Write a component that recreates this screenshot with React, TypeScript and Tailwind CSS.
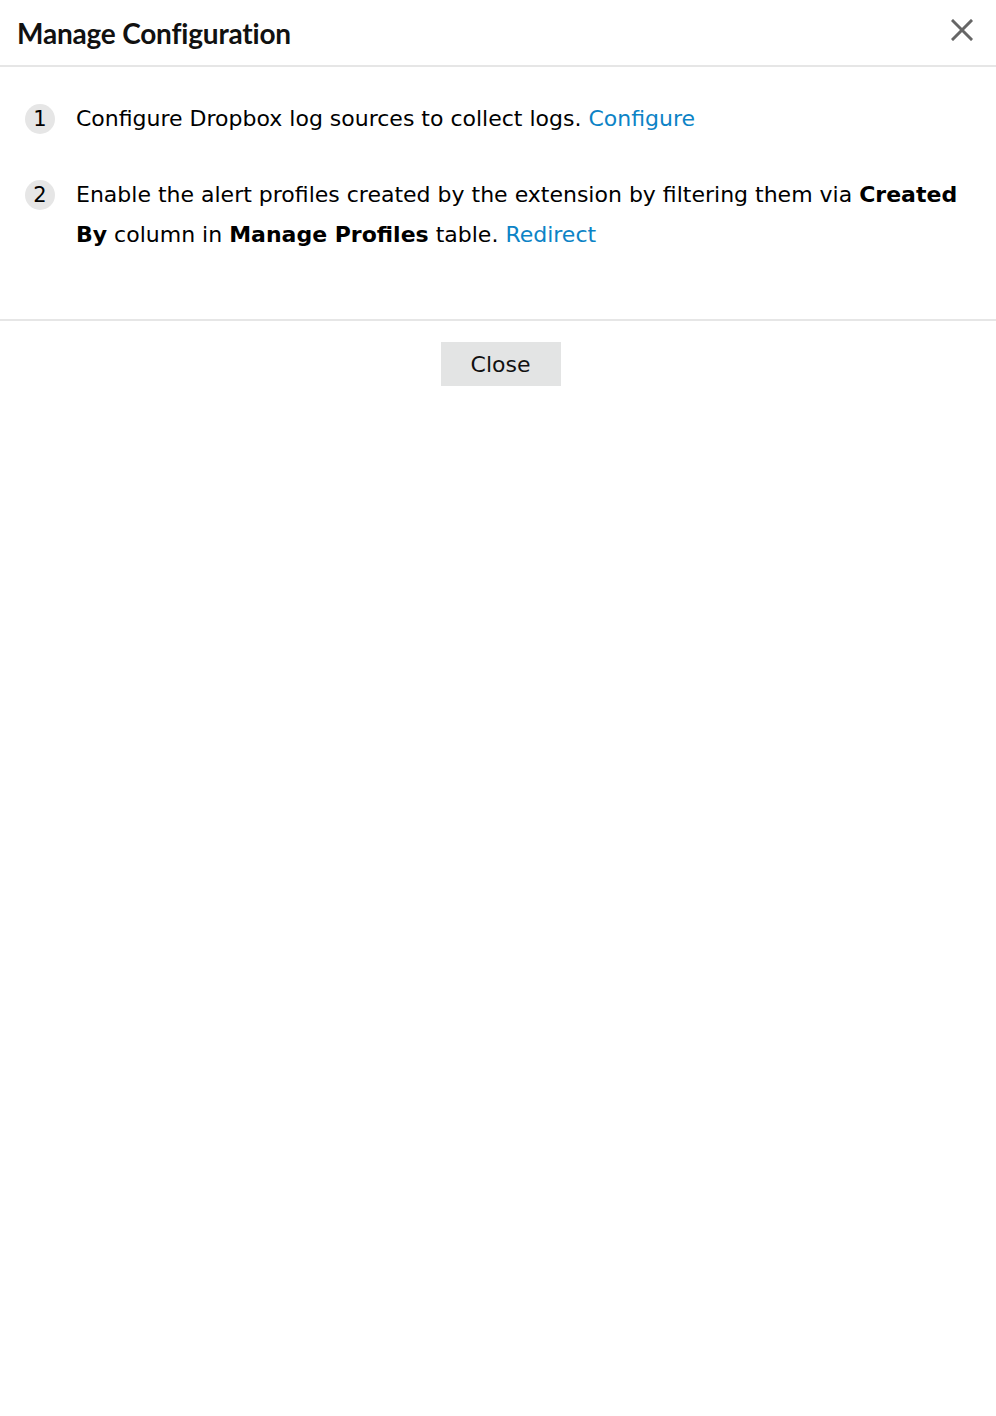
export default function App() {
  const body = { fontFamily: '"DejaVu Sans", Verdana, sans-serif' }
  return (
    <div className="min-h-screen bg-white text-black" style={body}>
      {/* Header */}
      <header className="h-[67px] border-b-2 border-[#e6e6e6] flex items-center justify-between pl-[17px] pr-[23px]">
        <h1 className="text-[28px] font-bold text-[#111] tracking-[-0.2px]" style={{ fontFamily: 'Lato, sans-serif' }}>
          Manage Configuration
        </h1>
        <button className="text-[#666] -mt-[6px]" aria-label="Close">
          <svg width="22" height="22" viewBox="0 0 22 22" fill="none" stroke="currentColor" strokeWidth="3" strokeLinecap="square">
            <path d="M2 2L20 20M20 2L2 20" />
          </svg>
        </button>
      </header>

      {/* Steps */}
      <main className="pl-[25px] pr-[30px] pt-[32px] pb-[64px] border-b-2 border-[#e6e6e6]">
        <div className="flex gap-[21px] text-[22px] leading-[40px]">
          <span className="mt-[5px] w-[30px] h-[30px] shrink-0 rounded-full bg-[#e6e6e6] flex items-center justify-center text-[21px]">1</span>
          <p>
            Configure Dropbox log sources to collect logs. <a className="text-[#0c83c6]">Configure</a>
          </p>
        </div>
        <div className="flex gap-[21px] text-[22px] leading-[40px] mt-[36px]">
          <span className="mt-[5px] w-[30px] h-[30px] shrink-0 rounded-full bg-[#e6e6e6] flex items-center justify-center text-[21px]">2</span>
          <p>
            Enable the alert profiles created by the extension by filtering them via <b>Created</b> <b>By</b> column in{' '}
            <b>Manage Profiles</b> table. <a className="text-[#0c83c6]">Redirect</a>
          </p>
        </div>
      </main>

      {/* Footer */}
      <div className="flex justify-center pt-[21px]">
        <button className="w-[120px] h-[44px] bg-[#e3e4e4] text-[22px] text-[#111] ml-[5px]">Close</button>
      </div>
    </div>
  )
}
